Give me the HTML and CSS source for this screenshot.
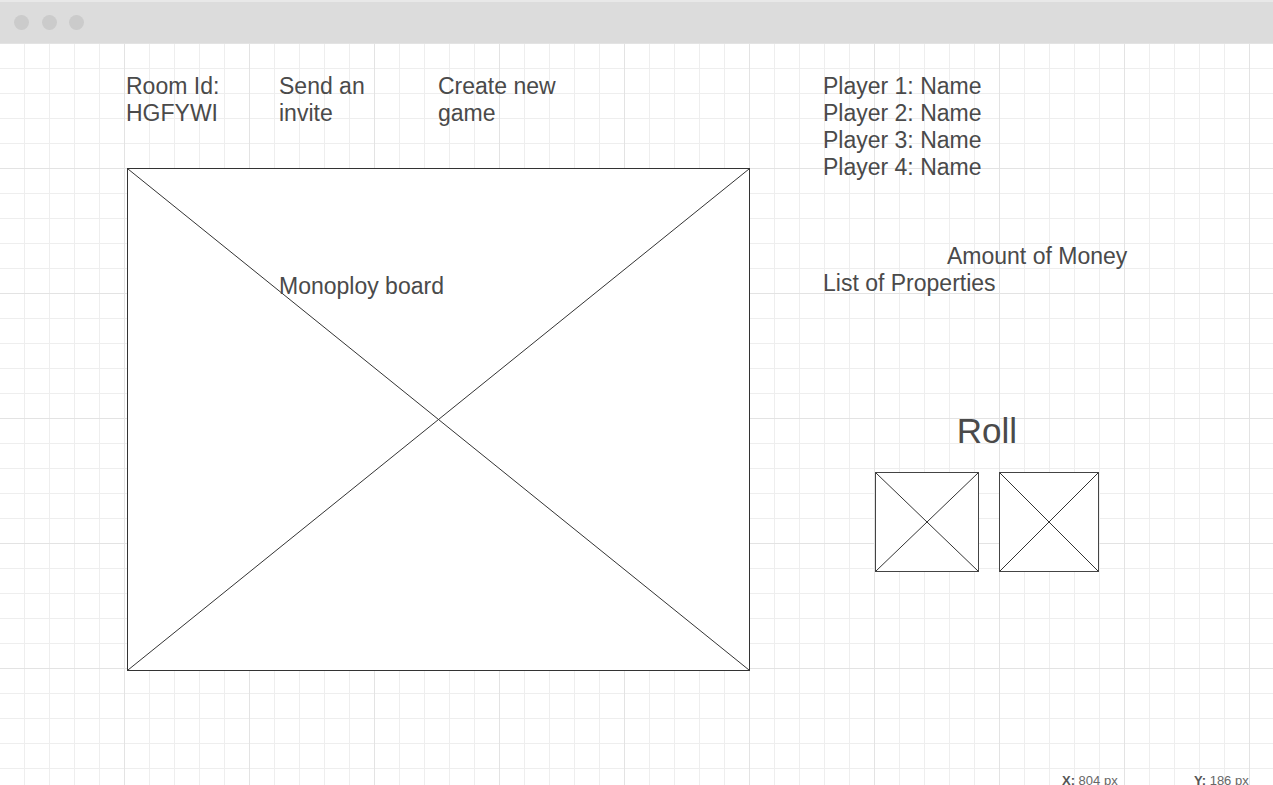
FILE: index.html
```html
<!DOCTYPE html>
<html lang="en">
<head>
    <meta charset="UTF-8">
    <meta name="viewport" content="width=device-width, initial-scale=1.0">
    <title>Monopoly Room</title>
    <link rel="stylesheet" href="styles.css">
</head>
<body>
    <div class="titlebar">
        <span class="dot"></span>
        <span class="dot"></span>
        <span class="dot"></span>
    </div>

    <div class="canvas">
        <div class="left">
            <div class="top-links">
                <div class="room">Room Id:<br>HGFYWI</div>
                <div class="invite">Send an invite</div>
                <div class="new-game">Create new game</div>
            </div>

            <div class="board">
                <svg class="cross" viewBox="0 0 100 100" preserveAspectRatio="none">
                    <line x1="0" y1="0" x2="100" y2="100" vector-effect="non-scaling-stroke"/>
                    <line x1="100" y1="0" x2="0" y2="100" vector-effect="non-scaling-stroke"/>
                </svg>
                <div class="board-label">Monoploy board</div>
            </div>
        </div>

        <div class="right">
            <div class="players">
                <div>Player 1: Name</div>
                <div>Player 2: Name</div>
                <div>Player 3: Name</div>
                <div>Player 4: Name</div>
            </div>

            <div class="money">Amount of Money</div>
            <div class="properties">List of Properties</div>

            <div class="roll-area">
                <div class="roll">Roll</div>
                <div class="dice">
                    <div class="die die-wide">
                        <svg class="cross" viewBox="0 0 100 100" preserveAspectRatio="none">
                            <line x1="0" y1="0" x2="100" y2="100" vector-effect="non-scaling-stroke"/>
                            <line x1="100" y1="0" x2="0" y2="100" vector-effect="non-scaling-stroke"/>
                        </svg>
                    </div>
                    <div class="die">
                        <svg class="cross" viewBox="0 0 100 100" preserveAspectRatio="none">
                            <line x1="0" y1="0" x2="100" y2="100" vector-effect="non-scaling-stroke"/>
                            <line x1="100" y1="0" x2="0" y2="100" vector-effect="non-scaling-stroke"/>
                        </svg>
                    </div>
                </div>
            </div>
        </div>

        <div class="coords">
            <span><b>X:</b> 804 px</span>
            <span><b>Y:</b> 186 px</span>
        </div>
    </div>
</body>
</html>
```

FILE: styles.css
```css
body {
    margin: 0;
    padding: 0;
    font-family: "Liberation Sans", Arial, sans-serif;
    color: #4a4a4a;
    overflow: hidden;
}

.titlebar {
    height: 41px;
    border-top: 2px solid #e8e8e8;
    background-color: #dcdcdc;
    display: flex;
    align-items: center;
    gap: 12.5px;
    padding-left: 14px;
}

.dot {
    width: 15px;
    height: 15px;
    border-radius: 50%;
    background-color: #cbcbcb;
}

.canvas {
    position: relative;
    height: 742px;
    box-sizing: border-box;
    padding: 30px 0 0 126px;
    display: grid;
    grid-template-columns: 697px auto;
    align-items: start;
    background-color: #fff;
    background-image:
        linear-gradient(to right, #e3e3e3 1px, transparent 1px),
        linear-gradient(to bottom, #e3e3e3 1px, transparent 1px),
        linear-gradient(to right, #eeeeee 1px, transparent 1px),
        linear-gradient(to bottom, #eeeeee 1px, transparent 1px);
    background-size: 125px 100%, 100% 125px, 25px 100%, 100% 25px;
    background-position: 124px 0, 0 0, 24px 0, 0 0;
}

.left, .right {
    font-size: 23px;
    line-height: 27px;
}

.top-links {
    display: flex;
}

.room {
    width: 153px;
}

.invite {
    width: 129px;
    padding-right: 30px;
}

.new-game {
    width: 130px;
}

.board {
    position: relative;
    margin: 41px 0 0 1px;
    width: 623px;
    height: 503px;
    box-sizing: border-box;
    border: 1px solid #333;
    background-color: #fff;
}

.cross {
    display: block;
    width: 100%;
    height: 100%;
}

.cross line {
    stroke: #333;
    stroke-width: 1;
}

.board-label {
    position: absolute;
    left: 151px;
    top: 104px;
}

.money {
    margin: 62px 0 0 124px;
}

.roll-area {
    margin: 114px 0 0 52px;
    width: 224px;
    display: flex;
    flex-direction: column;
    align-items: center;
}

.roll {
    font-size: 35px;
    line-height: 40px;
}

.dice {
    margin-top: 21px;
    display: flex;
    gap: 20px;
}

.die {
    width: 100px;
    height: 100px;
    box-sizing: border-box;
    border: 1px solid #444;
    background-color: #fff;
}

.die-wide {
    width: 104px;
}

.coords {
    position: absolute;
    left: 1062px;
    bottom: -3px;
    display: flex;
    font-size: 13px;
    line-height: 15px;
    color: #666;
}

.coords span {
    width: 132px;
}

.coords b {
    color: #555;
}
```
